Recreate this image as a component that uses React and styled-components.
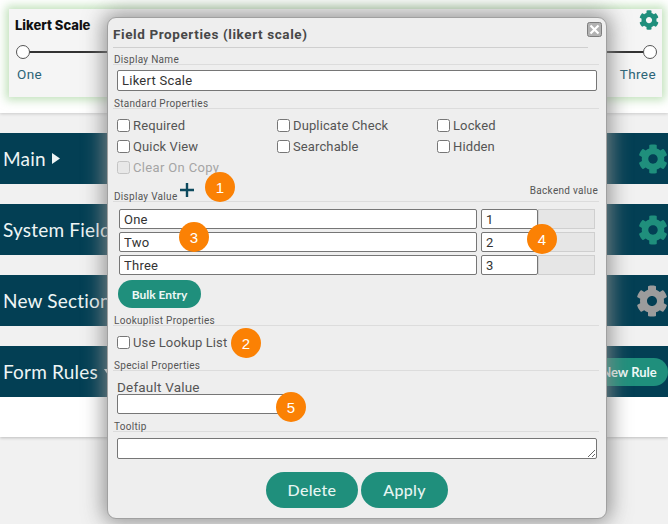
import React from 'react';
import styled, { createGlobalStyle } from 'styled-components';
import { FaCog } from 'react-icons/fa';

const Global = createGlobalStyle`
  html, body { margin: 0; padding: 0; background: #f1f1f1; }
  body { width: 668px; height: 524px; overflow: hidden; font-family: Roboto, "Liberation Sans", sans-serif; }
  * { box-sizing: border-box; }
`;

const Page = styled.div`
  position: relative;
  width: 668px;
  height: 524px;
  overflow: hidden;
`;

const Sheet = styled.div`
  background: #f1f1f1;
  height: 437px;
  box-shadow: 0 1px 3px rgba(0, 0, 0, 0.22);
  display: flex;
  flex-direction: column;
`;

const FieldArea = styled.div`
  height: 113px;
  padding: 9px 6px 0 9px;
  background: #fff;
  box-shadow: 0 1px 3px rgba(0, 0, 0, 0.16);
`;

const FieldCard = styled.div`
  position: relative;
  height: 88px;
  background: #f5f5f5;
  box-shadow: 0 0 9px 3px rgba(150, 205, 140, 0.6);
  padding: 8px 6px 0 8px;
`;

const FieldTitle = styled.div`
  margin-left: -2px;
  font-family: Inter, sans-serif;
  font-weight: 800;
  font-size: 13px;
  line-height: 16px;
  color: #111;
`;

const Track = styled.div`
  position: relative;
  height: 2px;
  margin: 18px 6px 0 6px;
  background: #333;
`;

const Thumb = styled.span`
  position: absolute;
  top: -6px;
  ${p => (p.$end ? 'right: -7px;' : 'left: -7px;')}
  width: 14px;
  height: 14px;
  border-radius: 50%;
  background: #fff;
  border: 1px solid #555;
`;

const ScaleLabels = styled.div`
  display: flex;
  justify-content: space-between;
  margin-top: 13px;
  font-size: 13.5px;
  line-height: 16px;
  letter-spacing: 0.4px;
  color: #2b6477;
`;

const CardGear = styled(FaCog)`
  position: absolute;
  top: 1px;
  right: 3px;
  width: 20px;
  height: 20px;
  color: #1f8f7c;
`;

const Sections = styled.div`
  display: flex;
  flex-direction: column;
  gap: 20px;
  padding-top: 20px;
`;

const SectionBar = styled.div`
  height: 51px;
  background: #033f54;
  color: #eef5f5;
  display: flex;
  align-items: center;
  justify-content: space-between;
  padding-left: 3px;
  font-family: Lato, sans-serif;
  font-size: 19px;
  letter-spacing: 0.2px;
`;

const SectionName = styled.span`
  display: flex;
  align-items: center;
  gap: 6px;
  white-space: nowrap;
`;

const Caret = styled.svg`
  width: 8px;
  height: 11px;
  flex: none;
`;

const SectionGear = styled(FaCog)`
  width: ${p => (p.$muted ? 32 : 30)}px;
  height: ${p => (p.$muted ? 32 : 30)}px;
  color: ${p => (p.$muted ? '#9c9c9c' : '#1f8f7c')};
`;

const BottomFill = styled.div`
  flex: 1;
  background: #fff;
`;

const NewRule = styled.button`
  height: 28px;
  width: 78px;
  padding: 0;
  border: 0;
  border-radius: 14px;
  background: #1f8f7c;
  color: #eef8f6;
  font-family: Lato, sans-serif;
  font-weight: 700;
  font-size: 13px;
`;

const Modal = styled.div`
  position: absolute;
  left: 107px;
  top: 17px;
  width: 500px;
  height: 502px;
  background: #eeeeee;
  border: 1px solid #a0a0a0;
  border-radius: 9px;
  box-shadow: 0 0 20px 4px rgba(135, 135, 135, 0.85);
  padding: 0 7px 0 5px;
  color: #444;
`;

const ModalHead = styled.div`
  height: 30px;
  margin-right: 11px;
  padding: 8px 0 0 0;
  border-bottom: 1px solid #cfcfcf;
  font-weight: 700;
  font-size: 13.5px;
  line-height: 16px;
  letter-spacing: 0.6px;
  color: #484848;
`;

const CloseBox = styled.svg`
  position: absolute;
  top: 4px;
  right: 4px;
  width: 15px;
  height: 15px;
`;

const Legend = styled.div`
  display: flex;
  align-items: flex-end;
  justify-content: space-between;
  height: ${p => p.$h || 17}px;
  padding: 0 1px;
  border-bottom: 1px solid #dcdcdc;
  font-size: 10px;
  line-height: 8px;
  letter-spacing: 0.3px;
  color: #555;
`;

const TextBox = styled.input`
  display: block;
  width: ${p => p.$w || 480}px;
  height: ${p => p.$h || 21}px;
  margin: ${p => p.$mt ?? 5}px 0 0 4px;
  padding: 0 4px;
  background: #fff;
  border: 1px solid #767676;
  border-radius: 2px;
  outline: 0;
  font-family: Roboto, sans-serif;
  font-size: 13px;
  letter-spacing: 0.25px;
  color: #333;
`;

const CheckGrid = styled.div`
  display: grid;
  grid-template-columns: repeat(3, 160px);
  grid-auto-rows: 21px;
  margin: 6px 0 0 4px;
`;

const CheckLabel = styled.label`
  display: flex;
  align-items: center;
  gap: 3px;
  height: 21px;
  font-size: 13px;
  letter-spacing: ${p => (p.$off ? 0.35 : 0.12)}px;
  color: ${p => (p.$off ? '#a5a5a5' : '#555')};
`;

const Check = styled.input.attrs({ type: 'checkbox' })`
  appearance: none;
  width: 13px;
  height: 13px;
  margin: 0;
  background: ${p => (p.disabled ? '#e8e8e8' : '#fff')};
  border: 1px solid ${p => (p.disabled ? '#c4c4c4' : '#767676')};
  border-radius: 2.5px;
`;

const PlusIcon = styled.svg`
  width: 14px;
  height: 14px;
  margin: 0 0 4px 2px;
`;

const LegendLeft = styled.span`
  display: flex;
  align-items: flex-end;
`;

const BackendNote = styled.span`
  margin-bottom: 6px;
`;

const ValueRows = styled.div`
  display: flex;
  flex-direction: column;
  gap: 3px;
  margin: 7px 0 0 6px;
`;

const ValueRow = styled.div`
  display: grid;
  grid-template-columns: 358px 61px 61px;
  height: 20px;
`;

const RowInput = styled.input`
  width: ${p => p.$w}px;
  height: 20px;
  margin-left: ${p => p.$ml || 0}px;
  padding: 0 4px;
  background: #fff;
  border: 1px solid #767676;
  border-radius: 2px;
  outline: 0;
  font-family: Roboto, sans-serif;
  font-size: 13px;
  letter-spacing: 0.25px;
  color: #333;
`;

const GreyCell = styled.div`
  width: 57px;
  height: 20px;
  background: #e6e6e6;
  border: 1px solid #cfcfcf;
`;

const BulkButton = styled.button`
  display: block;
  width: 83px;
  height: 28px;
  margin: 5px 0 0 5px;
  padding: 0;
  border: 0;
  border-radius: 14px;
  background: #1f8f7c;
  color: #eef8f6;
  font-family: Lato, sans-serif;
  font-weight: 700;
  font-size: 12px;
`;

const PlainLabel = styled.div`
  height: 13px;
  margin: 10px 0 0 4px;
  font-size: 13.5px;
  line-height: 13px;
  letter-spacing: 0.2px;
  color: #555;
`;

const TipArea = styled.textarea`
  display: block;
  width: 480px;
  height: 21px;
  margin: 6px 0 0 4px;
  background: #fff;
  border: 1px solid #767676;
  border-radius: 2px;
  outline: 0;
`;

const Actions = styled.div`
  display: flex;
  justify-content: center;
  gap: 3px;
  margin: 13px 0 0 2px;
`;

const ActionButton = styled.button`
  width: ${p => p.$w}px;
  height: 36px;
  padding: 0 0 2px;
  border: 0;
  border-radius: 18px;
  background: #1f8f7c;
  color: #e6f5f2;
  font-family: Lato, sans-serif;
  font-weight: 500;
  font-size: 16px;
  letter-spacing: 0.3px;
`;

const Badge = styled.span`
  position: absolute;
  left: ${p => p.$x - 15}px;
  top: ${p => p.$y - 15}px;
  width: 30px;
  height: 30px;
  border-radius: 50%;
  background: #fb8104;
  color: #fff;
  display: flex;
  align-items: center;
  justify-content: center;
  font-family: "Liberation Sans", sans-serif;
  font-size: 15px;
`;

const sections = ['Main', 'System Fields', 'New Section', 'Form Rules'];
const valueRows = [['One', '1'], ['Two', '2'], ['Three', '3']];
const badges = [[1, 220, 187], [2, 246, 343], [3, 194, 237], [4, 542, 239], [5, 291, 407]];

export default function App() {
  return (
    <Page>
      <Global />
      <Sheet>
        <FieldArea>
          <FieldCard>
            <FieldTitle>Likert Scale</FieldTitle>
            <CardGear />
            <Track>
              <Thumb />
              <Thumb $end />
            </Track>
            <ScaleLabels>
              <span>One</span>
              <span>Three</span>
            </ScaleLabels>
          </FieldCard>
        </FieldArea>
        <Sections>
          {sections.map((name, i) => (
            <SectionBar key={name}>
              <SectionName>
                {name}
                {i === 0 && (
                  <Caret viewBox="0 0 8 11"><path d="M0 0l8 5.5L0 11z" fill="#eef5f5" /></Caret>
                )}
                {i === 3 && (
                  <Caret viewBox="0 0 8 11"><path d="M0 3h8L4 9z" fill="#eef5f5" /></Caret>
                )}
              </SectionName>
              {i === 3 ? <NewRule>New Rule</NewRule> : <SectionGear $muted={i === 2} />}
            </SectionBar>
          ))}
        </Sections>
        <BottomFill />
      </Sheet>

      <Modal>
        <ModalHead>Field Properties (likert scale)</ModalHead>
        <CloseBox viewBox="0 0 15 15">
          <rect x="0.5" y="0.5" width="14" height="14" rx="2" fill="#b2b2b2" stroke="#7d7d7d" />
          <path d="M3.5 3.5l8 8M11.5 3.5l-8 8" stroke="#fff" strokeWidth="2.2" />
        </CloseBox>

        <Legend>Display Name</Legend>
        <TextBox defaultValue="Likert Scale" />

        <Legend $h={18}>Standard Properties</Legend>
        <CheckGrid>
          <CheckLabel><Check />Required</CheckLabel>
          <CheckLabel><Check />Duplicate Check</CheckLabel>
          <CheckLabel><Check />Locked</CheckLabel>
          <CheckLabel><Check />Quick View</CheckLabel>
          <CheckLabel><Check />Searchable</CheckLabel>
          <CheckLabel><Check />Hidden</CheckLabel>
          <CheckLabel $off><Check disabled />Clear On Copy</CheckLabel>
        </CheckGrid>

        <Legend $h={24}>
          <LegendLeft>
            Display Value
            <PlusIcon viewBox="0 0 14 14">
              <path d="M7 0v14M0 7h14" stroke="#0d4a5e" strokeWidth="2.4" />
            </PlusIcon>
          </LegendLeft>
          <BackendNote>Backend value</BackendNote>
        </Legend>
        <ValueRows>
          {valueRows.map(([label, value]) => (
            <ValueRow key={value}>
              <RowInput $w={358} defaultValue={label} />
              <RowInput $w={57} $ml={4} defaultValue={value} />
              <GreyCell />
            </ValueRow>
          ))}
        </ValueRows>
        <BulkButton>Bulk Entry</BulkButton>

        <Legend $h={18}>Lookuplist Properties</Legend>
        <CheckGrid>
          <CheckLabel><Check />Use Lookup List</CheckLabel>
        </CheckGrid>

        <Legend $h={18}>Special Properties</Legend>
        <PlainLabel>Default Value</PlainLabel>
        <TextBox $w={168} $h={20} $mt={0} />

        <Legend $h={18}>Tooltip</Legend>
        <TipArea />

        <Actions>
          <ActionButton $w={92}>Delete</ActionButton>
          <ActionButton $w={87}>Apply</ActionButton>
        </Actions>
      </Modal>

      {badges.map(([n, x, y]) => (
        <Badge key={n} $x={x} $y={y}>{n}</Badge>
      ))}
    </Page>
  );
}
